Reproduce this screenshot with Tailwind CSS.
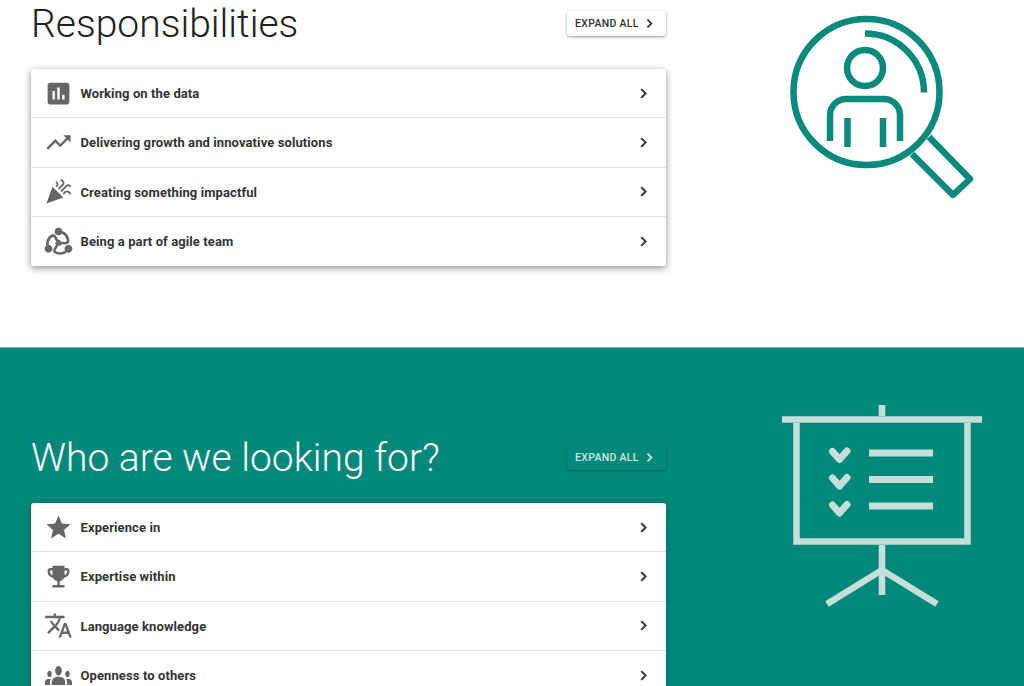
<!DOCTYPE html>
<html>
<head>
<meta charset="utf-8">
<script src="https://cdn.jsdelivr.net/npm/@tailwindcss/browser@4"></script>
</head>
<body class="overflow-hidden bg-white font-['Roboto',sans-serif]">
<div class="h-[686px] w-[1024px] overflow-hidden">
  <section class="relative h-[347px] bg-white pl-[31px]">
    <div class="w-[635px]">
      <div class="mb-[23px] flex h-[46px] items-center justify-between">
        <h2 class="pt-[1px] text-[39px] font-light leading-[46px] text-[#212121]">Responsibilities</h2>
        <button class="flex h-[25px] w-[99px] items-center justify-start gap-[2px] rounded-[3px] bg-white pl-[8px] text-[10.5px] font-medium tracking-[0.3px] text-[#333] shadow-[0_1px_3px_rgba(0,0,0,0.4)]"><span class="pt-[1px]">EXPAND ALL</span>
          <svg class="h-[17px] w-[17px]" viewBox="0 0 24 24" fill="currentColor" stroke="currentColor" stroke-width="0.7"><path d="M8.59 16.59 13.17 12 8.59 7.41 10 6l6 6-6 6z"/></svg>
        </button>
      </div>
      <div class="rounded-[2px] bg-white shadow-[0_2px_7px_rgba(0,0,0,0.45)]">
        <div class="flex h-[49.4px] items-center border-b border-[#e4e4e4] pl-[13px] pr-[13px]">
          <svg class="h-[29px] w-[29px] shrink-0 text-[#666]" viewBox="0 0 24 24" fill="currentColor"><path d="M19 3H5c-1.1 0-2 .9-2 2v14c0 1.1.9 2 2 2h14c1.1 0 2-.9 2-2V5c0-1.1-.9-2-2-2zM9 17H7v-7h2v7zm4 0h-2V7h2v10zm4 0h-2v-4h2v4z"/></svg>
          <span class="ml-[7.5px] flex-1 pt-[1px] text-[13px] font-bold tracking-[0.1px] text-[#333]">Working on the data</span>
          <svg class="h-[19px] w-[19px] text-[#333]" viewBox="0 0 24 24" fill="currentColor" stroke="currentColor" stroke-width="0.7"><path d="M8.59 16.59 13.17 12 8.59 7.41 10 6l6 6-6 6z"/></svg>
        </div>
        <div class="flex h-[49.4px] items-center border-b border-[#e4e4e4] pl-[13px] pr-[13px]">
          <svg class="h-[29px] w-[29px] shrink-0 text-[#666]" viewBox="0 0 24 24" fill="currentColor"><path d="M16 6l2.29 2.29-4.88 4.88-4-4L2 16.59 3.41 18l6-6 4 4 6.3-6.29L22 12V6z"/></svg>
          <span class="ml-[7.5px] flex-1 pt-[1px] text-[13px] font-bold tracking-[0.1px] text-[#333]">Delivering growth and innovative solutions</span>
          <svg class="h-[19px] w-[19px] text-[#333]" viewBox="0 0 24 24" fill="currentColor" stroke="currentColor" stroke-width="0.7"><path d="M8.59 16.59 13.17 12 8.59 7.41 10 6l6 6-6 6z"/></svg>
        </div>
        <div class="flex h-[49.4px] items-center border-b border-[#e4e4e4] pl-[13px] pr-[13px]">
          <svg class="h-[29px] w-[29px] shrink-0 text-[#666]" viewBox="0 0 24 24" fill="currentColor"><path d="M2 22l14-5-9-9zm12.53-9.47L19.13 7.93c.49-.49 1.28-.49 1.77 0l.59.59 1.06-1.06-.59-.59c-1.07-1.07-2.82-1.07-3.89 0l-4.6 4.6 1.06 1.06zM10.06 6.88l-.59.59 1.06 1.06.59-.59c1.07-1.07 1.07-2.82 0-3.89l-.59-.59-1.06 1.07.59.59c.48.48.48 1.27 0 1.76zm7 5l-1.59 1.59 1.06 1.06 1.59-1.59c.49-.49 1.28-.49 1.77 0l1.61 1.61 1.06-1.06-1.61-1.61c-1.08-1.07-2.82-1.07-3.89 0zm-2-6l-3.59 3.59 1.06 1.06 3.59-3.59c1.07-1.07 1.07-2.82 0-3.89l-1.59-1.59-1.06 1.06 1.59 1.59c.48.49.48 1.29 0 1.77z"/></svg>
          <span class="ml-[7.5px] flex-1 pt-[1px] text-[13px] font-bold tracking-[0.1px] text-[#333]">Creating something impactful</span>
          <svg class="h-[19px] w-[19px] text-[#333]" viewBox="0 0 24 24" fill="currentColor" stroke="currentColor" stroke-width="0.7"><path d="M8.59 16.59 13.17 12 8.59 7.41 10 6l6 6-6 6z"/></svg>
        </div>
        <div class="flex h-[49px] items-center pl-[13px] pr-[13px]">
          <svg class="h-[29px] w-[29px] shrink-0 text-[#666]" viewBox="0 0 29 29" fill="none" stroke="currentColor" stroke-width="2.6" stroke-linecap="round">
            <g><circle cx="14.5" cy="4.500" r="3.800" fill="currentColor" stroke="none"/><path d="M15 4.500C20.500 5 24.500 9.500 24 15 22 18 16.500 14.500 12.500 16.500"/></g>
            <g transform="rotate(120 14.5 16)"><circle cx="14.5" cy="4.500" r="3.800" fill="currentColor" stroke="none"/><path d="M15 4.500C20.500 5 24.500 9.500 24 15 22 18 16.500 14.500 12.500 16.500"/></g>
            <g transform="rotate(240 14.5 16)"><circle cx="14.5" cy="4.500" r="3.800" fill="currentColor" stroke="none"/><path d="M15 4.500C20.500 5 24.500 9.500 24 15 22 18 16.500 14.500 12.500 16.500"/></g>
          </svg>
          <span class="ml-[7.5px] flex-1 pt-[1px] text-[13px] font-bold tracking-[0.1px] text-[#333]">Being a part of agile team</span>
          <svg class="h-[19px] w-[19px] text-[#333]" viewBox="0 0 24 24" fill="currentColor" stroke="currentColor" stroke-width="0.7"><path d="M8.59 16.59 13.17 12 8.59 7.41 10 6l6 6-6 6z"/></svg>
        </div>
      </div>
    </div>
    <svg class="absolute left-[770px] top-0 h-[210px] w-[220px]" viewBox="770 0 220 210" fill="none" stroke="#0a8a7c" stroke-width="6.5">
      <circle cx="866.500" cy="92" r="73"/>
      <path d="M865 33.500A59 59 0 0 1 924 92.500"/>
      <circle cx="865" cy="68" r="18"/>
      <path d="M830 141V115a16 16 0 0 1 16-16h38a16 16 0 0 1 16 16v26M847.500 118v29M883 118v29"/>
      <path stroke-linejoin="round" d="M929 137 970 179 953 195 912 154"/>
    </svg>
  </section>
  <section class="relative h-[339px] border-t border-[#80c4bd] bg-[#00897b] pl-[31px] pt-[86px]">
    <div class="w-[635px]">
      <div class="mb-[23px] flex h-[46px] items-center justify-between">
        <h2 class="pt-[1px] text-[39px] font-light leading-[46px] text-white">Who are we looking for?</h2>
        <button class="flex h-[25px] w-[99px] items-center justify-start gap-[2px] rounded-[3px] bg-[#00897b] pl-[8px] text-[10.5px] font-medium tracking-[0.3px] text-[#cfe8e4] shadow-[0_1px_3px_rgba(0,0,0,0.35)]"><span class="pt-[1px]">EXPAND ALL</span>
          <svg class="h-[17px] w-[17px]" viewBox="0 0 24 24" fill="currentColor" stroke="currentColor" stroke-width="0.7"><path d="M8.59 16.59 13.17 12 8.59 7.41 10 6l6 6-6 6z"/></svg>
        </button>
      </div>
      <div class="rounded-[3px] bg-white shadow-[0_2px_7px_rgba(0,0,0,0.3)]">
        <div class="flex h-[49.4px] items-center border-b border-[#e4e4e4] pl-[13px] pr-[13px]">
          <svg class="h-[29px] w-[29px] shrink-0 text-[#666]" viewBox="0 0 24 24" fill="currentColor"><path d="M12 17.270 18.180 21l-1.640-7.030L22 9.240l-7.190-.61L12 2 9.190 8.630 2 9.240l5.460 4.730L5.820 21z"/></svg>
          <span class="ml-[7.5px] flex-1 pt-[1px] text-[13px] font-bold tracking-[0.1px] text-[#333]">Experience in</span>
          <svg class="h-[19px] w-[19px] text-[#333]" viewBox="0 0 24 24" fill="currentColor" stroke="currentColor" stroke-width="0.7"><path d="M8.59 16.59 13.17 12 8.59 7.41 10 6l6 6-6 6z"/></svg>
        </div>
        <div class="flex h-[49.4px] items-center border-b border-[#e4e4e4] pl-[13px] pr-[13px]">
          <svg class="h-[29px] w-[29px] shrink-0 text-[#666]" viewBox="0 0 24 24" fill="currentColor"><path d="M19 5h-2V3H7v2H5c-1.100 0-2 .9-2 2v1c0 2.550 1.920 4.630 4.390 4.940.63 1.500 1.980 2.630 3.610 2.960V19H7v2h10v-2h-4v-3.100c1.630-.33 2.980-1.460 3.610-2.960C19.080 12.630 21 10.550 21 8V7c0-1.100-.9-2-2-2zM5 8V7h2v3.820C5.840 10.400 5 9.300 5 8zm14 0c0 1.300-.84 2.400-2 2.820V7h2v1z"/></svg>
          <span class="ml-[7.5px] flex-1 pt-[1px] text-[13px] font-bold tracking-[0.1px] text-[#333]">Expertise within</span>
          <svg class="h-[19px] w-[19px] text-[#333]" viewBox="0 0 24 24" fill="currentColor" stroke="currentColor" stroke-width="0.7"><path d="M8.59 16.59 13.17 12 8.59 7.41 10 6l6 6-6 6z"/></svg>
        </div>
        <div class="flex h-[49.4px] items-center border-b border-[#e4e4e4] pl-[13px] pr-[13px]">
          <svg class="h-[29px] w-[29px] shrink-0 text-[#666]" viewBox="0 0 24 24" fill="currentColor"><path d="M12.87 15.07l-2.54-2.51.03-.03c1.740-1.940 2.980-4.170 3.710-6.530H17V4h-7V2H8v2H1v1.990h11.170C11.500 7.920 10.440 9.750 9 11.350 8.070 10.320 7.300 9.190 6.690 8h-2c.73 1.630 1.730 3.170 2.980 4.560l-5.090 5.020L4 19l5-5 3.110 3.110.76-2.040zM18.500 10h-2L12 22h2l1.120-3h4.750L21 22h2l-4.500-12zm-2.620 7l1.620-4.330L19.120 17h-3.240z"/></svg>
          <span class="ml-[7.5px] flex-1 pt-[1px] text-[13px] font-bold tracking-[0.1px] text-[#333]">Language knowledge</span>
          <svg class="h-[19px] w-[19px] text-[#333]" viewBox="0 0 24 24" fill="currentColor" stroke="currentColor" stroke-width="0.7"><path d="M8.59 16.59 13.17 12 8.59 7.41 10 6l6 6-6 6z"/></svg>
        </div>
        <div class="flex h-[49px] items-center pl-[13px] pr-[13px]">
          <svg class="mx-[1px] h-[19px] w-[27px] shrink-0 text-[#666]" viewBox="0 6 24 12" preserveAspectRatio="none" fill="currentColor"><path d="M12 12.750c1.630 0 3.070.39 4.240.9 1.080.48 1.760 1.560 1.760 2.730V18H6v-1.610c0-1.180.68-2.260 1.760-2.730 1.170-.52 2.610-.91 4.240-.91zM4 13c1.100 0 2-.9 2-2s-.9-2-2-2-2 .9-2 2 .9 2 2 2zm1.130 1.100c-.37-.06-.74-.1-1.130-.1-.99 0-1.930.21-2.780.58C.48 14.900 0 15.620 0 16.430V18h4.500v-1.610c0-.83.23-1.610.63-2.290zM20 13c1.100 0 2-.9 2-2s-.9-2-2-2-2 .9-2 2 .9 2 2 2zm4 3.430c0-.81-.48-1.530-1.220-1.850-.85-.37-1.790-.58-2.780-.58-.39 0-.76.04-1.130.1.4.68.63 1.460.63 2.290V18H24v-1.570zM12 6c1.660 0 3 1.340 3 3s-1.340 3-3 3-3-1.340-3-3 1.340-3 3-3z"/></svg>
          <span class="ml-[7.5px] flex-1 pt-[1px] text-[13px] font-bold tracking-[0.1px] text-[#333]">Openness to others</span>
          <svg class="h-[19px] w-[19px] text-[#333]" viewBox="0 0 24 24" fill="currentColor" stroke="currentColor" stroke-width="0.7"><path d="M8.59 16.59 13.17 12 8.59 7.41 10 6l6 6-6 6z"/></svg>
        </div>
      </div>
    </div>
    <svg class="absolute left-[770px] top-[47px] h-[220px] w-[220px]" viewBox="770 395 220 220" fill="none" stroke="#c6dfdb" stroke-width="6.500">
      <path d="M782 419.500H982M882 405V416M796.500 423V541.500H967.500V423M882 545V595"/>
      <path d="M827 604 882 570 937 604"/>
      <path stroke-linecap="round" stroke-linejoin="round" stroke-width="7" d="M832.500 451.500 839.500 459.500 847 451M832.500 478 839.500 486 847 477.500M832.500 505 839.500 513 847 504.500"/>
      <path stroke-width="7" d="M869 453H933M869 479.500H933M869 506H933"/>
    </svg>
  </section>
</div>
</body>
</html>
